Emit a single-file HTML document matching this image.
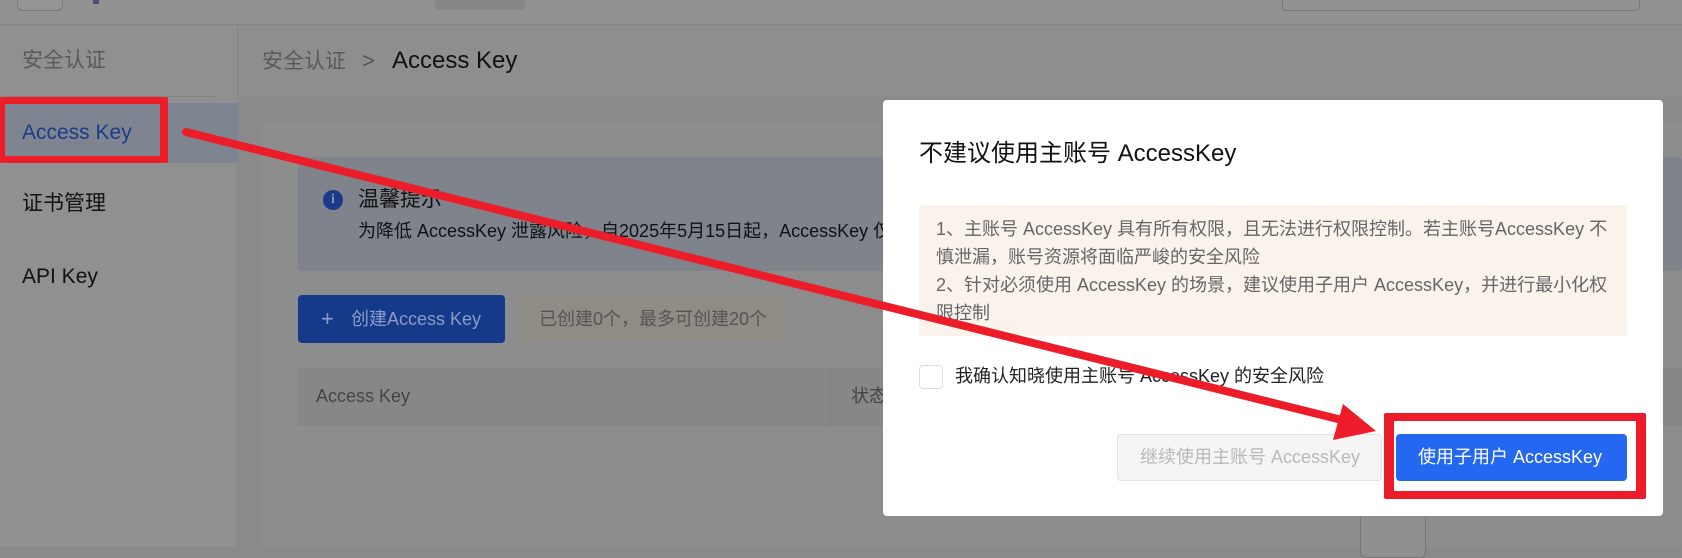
<!DOCTYPE html>
<html><head><meta charset="utf-8"><style>
*{box-sizing:border-box;margin:0;padding:0}
body{width:1682px;height:547px;overflow:hidden;position:relative;background:#8a8a8a;font-family:"Liberation Sans","Noto Sans CJK SC",sans-serif}
.a{position:absolute}
.t{position:absolute;white-space:nowrap;line-height:1}
</style></head><body>
<div class="a" style="left:0;top:0;width:1682px;height:25px;background:#929292;border-bottom:1px solid #858585"></div>
<div class="a" style="left:17px;top:-10px;width:46px;height:21px;border:1px solid #7a7a7a;border-radius:6px;background:#959595"></div>
<div class="a" style="left:93px;top:0;width:6px;height:4px;background:#5a4a70"></div>
<div class="a" style="left:435px;top:0;width:90px;height:10px;background:#868686;border-radius:0 0 4px 4px"></div>
<div class="a" style="left:1282px;top:-6px;width:358px;height:17px;border:1px solid #7a7a7a;border-radius:4px;background:#929292"></div>
<div class="a" style="left:0;top:26px;width:238px;height:521px;background:#909090;border-right:1px solid #868686"></div>
<div class="t" style="left:22px;top:50px;font-size:21px;color:#5a5a5a">安全认证</div>
<div class="a" style="left:0;top:96px;width:214px;height:1px;background:#828282"></div>
<div class="a" style="left:0;top:103px;width:238px;height:60px;background:#7f8590"></div>
<div class="t" style="left:22px;top:122px;font-size:21px;color:#1d3a8a">Access Key</div>
<div class="a" style="left:0;top:97px;width:168px;height:66px;border:7px solid #ec1c28;border-left-width:5px;border-right-width:8px;border-radius:2px"></div>
<div class="t" style="left:22px;top:193px;font-size:21px;color:#111">证书管理</div>
<div class="t" style="left:22px;top:266px;font-size:21px;color:#111">API Key</div>
<div class="a" style="left:239px;top:26px;width:1443px;height:71px;background:#8e8e8e"></div>
<div class="t" style="left:262px;top:51px;font-size:21px;color:#5a5a5a">安全认证</div>
<div class="t" style="left:362px;top:50px;font-size:22px;color:#555">&gt;</div>
<div class="t" style="left:392px;top:49px;font-size:24px;color:#111">Access Key</div>
<div class="a" style="left:262px;top:121px;width:1420px;height:426px;background:#8d8d8d;border-radius:4px"></div>
<div class="a" style="left:298px;top:157px;width:1384px;height:114px;background:#7e838c;border-radius:4px"></div>
<div class="a" style="left:323px;top:190px;width:20px;height:20px;border-radius:50%;background:#1d3a8a;color:#8a93a8;font:bold 14px/20px 'Liberation Serif',serif;text-align:center">i</div>
<div class="t" style="left:358px;top:189px;font-size:21px;color:#111">温馨提示</div>
<div class="t" style="left:358px;top:222px;font-size:18px;color:#111">为降低 AccessKey 泄露风险，自2025年5月15日起，AccessKey 仅</div>
<div class="a" style="left:298px;top:295px;width:207px;height:48px;background:#163a8a;border-radius:4px"></div>
<div class="t" style="left:321px;top:308px;font-size:22px;color:#8a9cc8">+</div>
<div class="t" style="left:351px;top:310px;font-size:18px;color:#8a9cc8">创建Access Key</div>
<div class="a" style="left:520px;top:296px;width:264px;height:45px;background:#8f8b85;border-radius:4px"></div>
<div class="t" style="left:539px;top:310px;font-size:18px;color:#555">已创建0个，最多可创建20个</div>
<div class="a" style="left:298px;top:368px;width:1384px;height:58px;background:#878787"></div>
<div class="a" style="left:830px;top:368px;width:1px;height:58px;background:#7e7e7e"></div>
<div class="t" style="left:316px;top:387px;font-size:18px;color:#444">Access Key</div>
<div class="t" style="left:851px;top:387px;font-size:18px;color:#444">状态</div>
<div class="a" style="left:1360px;top:508px;width:66px;height:50px;border:1px solid #777;border-radius:6px;background:#8f8f8f"></div>
<div class="a" style="left:883px;top:100px;width:780px;height:416px;background:#fff;border-radius:4px"></div>
<div class="t" style="left:919px;top:142px;font-size:24px;color:#111">不建议使用主账号 AccessKey</div>
<div class="a" style="left:919px;top:205px;width:708px;height:131px;background:#faf3ec;border-radius:4px"></div>
<div class="a" style="left:936px;top:215px;width:684px;font-size:18px;line-height:28px;color:#666">1、主账号 AccessKey 具有所有权限，且无法进行权限控制。若主账号AccessKey 不慎泄漏，账号资源将面临严峻的安全风险<br>2、针对必须使用 AccessKey 的场景，建议使用子用户 AccessKey，并进行最小化权限控制</div>
<div class="a" style="left:919px;top:365px;width:24px;height:24px;border:1px solid #ddd;border-radius:4px"></div>
<div class="t" style="left:955px;top:367px;font-size:18px;color:#222">我确认知晓使用主账号 AccessKey 的安全风险</div>
<div class="a" style="left:1117px;top:434px;width:265px;height:47px;background:#f5f5f5;border:1px solid #e2e2e2;border-radius:4px"></div>
<div class="t" style="left:1140px;top:448px;font-size:18px;color:#b8b8b8">继续使用主账号 AccessKey</div>
<div class="a" style="left:1396px;top:434px;width:231px;height:47px;background:#2468f2;border-radius:4px"></div>
<div class="t" style="left:1418px;top:448px;font-size:18px;color:#fff">使用子用户 AccessKey</div>
<div class="a" style="left:1384px;top:413px;width:262px;height:86px;border:8px solid #ec1c28;border-width:8px 10px;border-radius:2px"></div>
<svg class="a" style="left:0;top:0" width="1682" height="547">
<line x1="186" y1="132" x2="1350" y2="422" stroke="#ec1c28" stroke-width="8" stroke-linecap="round"/>
<polygon points="1376,431 1343,404 1333,440" fill="#ec1c28"/>
</svg>
</body></html>
